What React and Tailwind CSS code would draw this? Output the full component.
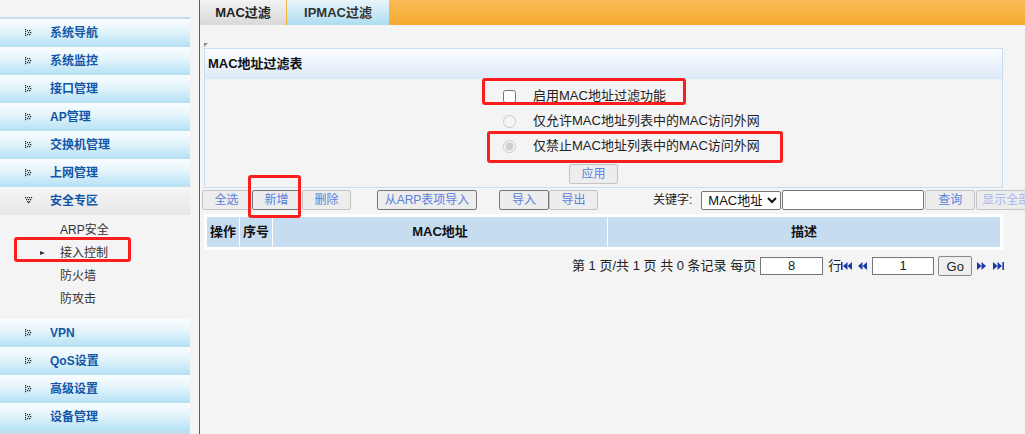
import React from 'react'

const FONT = { fontFamily: '"Liberation Sans", "Noto Sans CJK SC", sans-serif' }

function DotArrow({ down }) {
  const pts = down
    ? [[0, 0], [2, 0], [4, 0], [6, 0], [1, 2], [3, 2], [5, 2], [2, 4], [4, 4], [3, 5]]
    : [[0, 0], [0, 2], [2, 1], [3, 3], [2, 5], [0, 4], [0, 6], [5, 3], [4, 5], [4, 1]]
  return (
    <svg width="8" height="8" viewBox="0 0 8 8" className="shrink-0">
      {pts.map(([x, y], i) => (
        <rect key={i} x={x} y={y} width="1.2" height="1.2" fill="#222" />
      ))}
    </svg>
  )
}

function NavItem({ label, down }) {
  const bg = down
    ? 'bg-[linear-gradient(#f6f6f6,#e6e6e6)]'
    : 'bg-[linear-gradient(#fafdff_0%,#e6f5fc_40%,#b4e1f4_100%)]'
  return (
    <div className={`flex h-[28px] w-[190px] items-center ${bg}`}>
      <div className="ml-[25px] w-[25px]">
        <DotArrow down={down} />
      </div>
      <span className="text-[12px] font-bold text-[#1256a8]">{label}</span>
    </div>
  )
}

function SubItem({ label, active }) {
  return (
    <div className="flex h-[23px] items-center text-[12px] text-[#333]">
      <div className="ml-[40px] w-[20px]">
        {active && (
          <svg width="6" height="6" viewBox="0 0 6 6">
            <polygon points="0,1 5,3 0,5" fill="#2a3a55" />
          </svg>
        )}
      </div>
      {label}
    </div>
  )
}

function Btn({ children, className = '', strong }) {
  return (
    <button
      className={`flex h-[20px] shrink-0 items-center justify-center whitespace-nowrap rounded-[2px] border bg-[#ededed] text-[12px] text-[#5b7fdc] ${
        strong ? 'border-[#767676]' : 'border-[#c4c4c4]'
      } ${className}`}
    >
      {children}
    </button>
  )
}

function PagerIcon({ dir, bar }) {
  return (
    <svg width="11" height="10" viewBox="0 0 11 10" className="shrink-0">
      {dir === 'left' ? (
        <g fill="#1a3aa6">
          {bar && <rect x="0" y="1" width="1.6" height="8" />}
          <polygon points={bar ? '2,5 6.5,1 6.5,9' : '0,5 4.5,1 4.5,9'} />
          <polygon points={bar ? '6.5,5 11,1 11,9' : '4.5,5 9,1 9,9'} />
        </g>
      ) : (
        <g fill="#1a3aa6">
          <polygon points="0,1 4.5,5 0,9" />
          <polygon points="4.5,1 9,5 4.5,9" />
          {bar && <rect x="9.4" y="1" width="1.6" height="8" />}
        </g>
      )}
    </svg>
  )
}

export default function App() {
  return (
    <div style={FONT} className="relative flex h-[434px] w-[1025px] overflow-hidden bg-[#f4f4f4]">
      {/* sidebar */}
      <aside className="w-[199px] shrink-0">
        <div className="mt-[17px] h-[2px] w-[190px] bg-[#c5dcef]" />
        <NavItem label="系统导航" />
        <NavItem label="系统监控" />
        <NavItem label="接口管理" />
        <NavItem label="AP管理" />
        <NavItem label="交换机管理" />
        <NavItem label="上网管理" />
        <NavItem label="安全专区" down />
        <div className="pb-[9px] pt-[3px]">
          <SubItem label="ARP安全" />
          <SubItem label="接入控制" active />
          <SubItem label="防火墙" />
          <SubItem label="防攻击" />
        </div>
        <NavItem label="VPN" />
        <NavItem label="QoS设置" />
        <NavItem label="高级设置" />
        <NavItem label="设备管理" />
        <div className="h-[4px] w-[190px] bg-[#c5dcef]" />
      </aside>
      <div className="w-px shrink-0 bg-[#1a6ad6]" />

      {/* main */}
      <main className="min-w-0 flex-1 overflow-hidden">
        <div className="flex h-[25px] bg-[linear-gradient(#f8bb58,#f6aa2e)]">
          <div className="flex w-[86px] items-center justify-center bg-[linear-gradient(#f2f2f2,#d9d9d9)] text-[13px] font-bold text-[#222]">
            MAC过滤
          </div>
          <div className="ml-px flex w-[102px] items-center justify-center bg-[linear-gradient(#e9f6fc,#aedcf1)] text-[13px] font-bold text-[#333]">
            IPMAC过滤
          </div>
        </div>

        <div className="h-[23px] pl-[4px] pt-[18px]">
          <svg width="4" height="4" viewBox="0 0 4 4">
            <polygon points="0,0 4,0 0,4" fill="#8a8a8a" />
          </svg>
        </div>

        <section className="ml-[4px] w-[799px] border border-[#c8ddf1]">
          <div className="flex h-[30px] items-center bg-[linear-gradient(#fbfdff,#dde9f9)] pl-[3px] text-[13px] font-bold text-[#111]">
            MAC地址过滤表
          </div>
          <div className="h-[108px] pt-[7px] text-[13px] text-[#222]">
            <label className="flex h-[20px] items-center pl-[298px]">
              <input type="checkbox" className="m-0 h-[13px] w-[13px]" />
              <span className="ml-[17px]">启用MAC地址过滤功能</span>
            </label>
            <label className="mt-[5px] flex h-[20px] items-center pl-[298px]">
              <input type="radio" name="mode" disabled className="m-0 h-[13px] w-[13px]" />
              <span className="ml-[17px]">仅允许MAC地址列表中的MAC访问外网</span>
            </label>
            <label className="mt-[5px] flex h-[20px] items-center pl-[298px]">
              <input type="radio" name="mode" disabled defaultChecked className="m-0 h-[13px] w-[13px]" />
              <span className="ml-[17px]">仅禁止MAC地址列表中的MAC访问外网</span>
            </label>
            <div className="mt-[8px] pl-[364px]">
              <Btn className="w-[49px]">应用</Btn>
            </div>
          </div>
        </section>

        <div className="mt-[2px] flex h-[20px] w-[900px] items-center">
          <Btn className="ml-[2px] w-[49px]">全选</Btn>
          <Btn strong className="ml-px w-[49px]">新增</Btn>
          <Btn className="ml-px w-[49px]">删除</Btn>
          <Btn strong className="ml-[26px] w-[100px]">从ARP表项导入</Btn>
          <Btn strong className="ml-[22px] w-[50px]">导入</Btn>
          <Btn className="w-[49px]">导出</Btn>
          <span className="ml-[55px] shrink-0 whitespace-nowrap text-[12px] text-[#222]">关键字:</span>
          <select className="ml-[9px] h-[19px] w-[80px] shrink-0 rounded-[2px] border border-[#767676] bg-white px-[2px] text-[13px] text-[#111]">
            <option>MAC地址</option>
          </select>
          <input className="ml-px h-[20px] w-[142px] shrink-0 rounded-[2px] border border-[#767676] bg-white" />
          <Btn className="ml-px w-[50px]">查询</Btn>
          <Btn className="ml-px w-[60px] justify-start pl-[5px] text-[#a3b6ee]">显示全部</Btn>
        </div>

        <div className="ml-[4px] mt-[4px] w-[799px] bg-white p-[3px]">
          <div className="flex h-[30px] gap-px text-[13px] font-bold text-[#111]">
            <div className="flex w-[32px] items-center justify-center bg-[#c6dcf0]">操作</div>
            <div className="flex w-[32px] items-center justify-center bg-[#c6dcf0]">序号</div>
            <div className="flex w-[334px] items-center justify-center bg-[#c6dcf0]">MAC地址</div>
            <div className="flex flex-1 items-center justify-center bg-[#c6dcf0]">描述</div>
          </div>
        </div>

        <div className="mt-[6px] flex h-[20px] w-[900px] items-center whitespace-nowrap text-[13px] text-[#222]">
          <span className="ml-[372px]">第 1 页/共 1 页 共 0 条记录 每页</span>
          <input defaultValue="8" className="ml-[4px] h-[18px] w-[63px] shrink-0 border border-[#767676] bg-white text-center text-[13px]" />
          <span className="ml-[5px]">行</span>
          <PagerIcon dir="left" bar />
          <span className="ml-[6px]"><PagerIcon dir="left" /></span>
          <input defaultValue="1" className="ml-[3px] h-[18px] w-[62px] shrink-0 border border-[#767676] bg-white text-center text-[13px]" />
          <button className="ml-[4px] h-[20px] w-[34px] shrink-0 rounded-[2px] border border-[#8a8a8a] bg-[#efefef] text-[13px]">Go</button>
          <span className="ml-[5px]"><PagerIcon dir="right" /></span>
          <span className="ml-[5px]"><PagerIcon dir="right" bar /></span>
        </div>
      </main>

      {/* red annotation boxes */}
      <div className="pointer-events-none absolute left-[14px] top-[237px] h-[25px] w-[117px] rounded-[3px] border-[3px] border-[#fa1e1e]" />
      <div className="pointer-events-none absolute left-[482px] top-[78px] h-[27px] w-[204px] rounded-[3px] border-[3px] border-[#fa1e1e]" />
      <div className="pointer-events-none absolute left-[487px] top-[131px] h-[32px] w-[296px] rounded-[3px] border-[3px] border-[#fa1e1e]" />
      <div className="pointer-events-none absolute left-[248px] top-[175px] h-[43px] w-[53px] rounded-[3px] border-[3px] border-[#fa1e1e]" />
    </div>
  )
}
